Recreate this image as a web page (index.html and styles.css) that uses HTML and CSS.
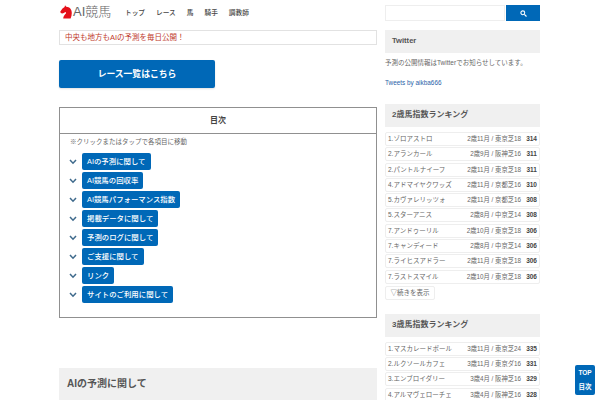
FILE: index.html
```html
<!DOCTYPE html>
<html lang="ja">
<head>
<meta charset="utf-8">
<title>AI競馬</title>
<link rel="stylesheet" href="styles.css">
</head>
<body>
<div class="page">
  <main class="main">
    <header class="site-header">
      <a class="logo">
        <svg class="logo-icon" viewBox="0 0 12 14" width="12" height="14"><path fill="#e5101a" d="M5 0.3 L6.3 1.7 C9.6 1.9 11.8 4.2 11.8 8 C11.8 10 11.4 11.8 10.6 13.4 L3.2 13.4 C3.3 11.4 4.5 10 5.9 8.6 C6.2 7.8 5.9 7.2 5.3 7.1 C4.4 7.8 3.4 8.6 2.3 8.6 L0.7 8 L0.3 6.6 L2.5 3.4 L4.6 2.1 Z"/></svg>
        <span class="logo-text">AI競馬</span>
      </a>
      <nav class="nav">
        <a>トップ</a><a>レース</a><a>馬</a><a>騎手</a><a>調教師</a>
      </nav>
    </header>
    <p class="notice">中央も地方もAIの予測を毎日公開！</p>
    <a class="race-btn">レース一覧はこちら</a>
    <section class="toc">
      <div class="toc-title">目次</div>
      <p class="toc-note">※クリックまたはタップで各項目に移動</p>
      <ul class="toc-list">
        <li><svg class="chev" viewBox="0 0 8 6" width="8" height="6"><path d="M1 1 L4 4.2 L7 1" fill="none" stroke="#3f6a8c" stroke-width="1.5"/></svg><a class="toc-link">AIの予測に関して</a></li>
        <li><svg class="chev" viewBox="0 0 8 6" width="8" height="6"><path d="M1 1 L4 4.2 L7 1" fill="none" stroke="#3f6a8c" stroke-width="1.5"/></svg><a class="toc-link">AI競馬の回収率</a></li>
        <li><svg class="chev" viewBox="0 0 8 6" width="8" height="6"><path d="M1 1 L4 4.2 L7 1" fill="none" stroke="#3f6a8c" stroke-width="1.5"/></svg><a class="toc-link">AI競馬パフォーマンス指数</a></li>
        <li><svg class="chev" viewBox="0 0 8 6" width="8" height="6"><path d="M1 1 L4 4.2 L7 1" fill="none" stroke="#3f6a8c" stroke-width="1.5"/></svg><a class="toc-link">掲載データに関して</a></li>
        <li><svg class="chev" viewBox="0 0 8 6" width="8" height="6"><path d="M1 1 L4 4.2 L7 1" fill="none" stroke="#3f6a8c" stroke-width="1.5"/></svg><a class="toc-link">予測のログに関して</a></li>
        <li><svg class="chev" viewBox="0 0 8 6" width="8" height="6"><path d="M1 1 L4 4.2 L7 1" fill="none" stroke="#3f6a8c" stroke-width="1.5"/></svg><a class="toc-link">ご支援に関して</a></li>
        <li><svg class="chev" viewBox="0 0 8 6" width="8" height="6"><path d="M1 1 L4 4.2 L7 1" fill="none" stroke="#3f6a8c" stroke-width="1.5"/></svg><a class="toc-link">リンク</a></li>
        <li><svg class="chev" viewBox="0 0 8 6" width="8" height="6"><path d="M1 1 L4 4.2 L7 1" fill="none" stroke="#3f6a8c" stroke-width="1.5"/></svg><a class="toc-link">サイトのご利用に関して</a></li>
      </ul>
    </section>
    <h2 class="main-heading">AIの予測に関して</h2>
  </main>
  <aside class="side">
    <form class="search">
      <input class="search-input" type="text" aria-label="検索">
      <button class="search-btn" type="button" aria-label="検索">
        <svg viewBox="0 0 8 8" width="7" height="7"><circle cx="3.2" cy="3.2" r="2.2" fill="none" stroke="#fff" stroke-width="1.2"/><path d="M5 5 L7.4 7.4" stroke="#fff" stroke-width="1.4"/></svg>
      </button>
    </form>
    <h3 class="side-heading twitter">Twitter</h3>
    <p class="side-text">予測の公開情報はTwitterでお知らせしています。</p>
    <a class="tweets">Tweets by aikba666</a>
    <h3 class="side-heading rank-head">2歳馬指数ランキング</h3>
    <ul class="rank">
      <li><span class="name">1.ゾロアストロ</span><span class="info">2歳11月 / 東京芝18</span><b class="score">314</b></li>
      <li><span class="name">2.アランカール</span><span class="info">2歳9月 / 阪神芝16</span><b class="score">311</b></li>
      <li><span class="name">2.パントルナイーフ</span><span class="info">2歳11月 / 東京芝18</span><b class="score">311</b></li>
      <li><span class="name">4.アドマイヤクワッズ</span><span class="info">2歳11月 / 京都芝16</span><b class="score">310</b></li>
      <li><span class="name">5.カヴァレリッツォ</span><span class="info">2歳11月 / 京都芝16</span><b class="score">308</b></li>
      <li><span class="name">5.スターアニス</span><span class="info">2歳8月 / 中京芝14</span><b class="score">308</b></li>
      <li><span class="name">7.アンドゥーリル</span><span class="info">2歳10月 / 東京芝18</span><b class="score">306</b></li>
      <li><span class="name">7.キャンディード</span><span class="info">2歳8月 / 中京芝14</span><b class="score">306</b></li>
      <li><span class="name">7.ライヒスアドラー</span><span class="info">2歳11月 / 東京芝18</span><b class="score">306</b></li>
      <li><span class="name">7.ラストスマイル</span><span class="info">2歳10月 / 東京芝18</span><b class="score">306</b></li>
    </ul>
    <button class="more" type="button">▽続きを表示</button>
    <h3 class="side-heading rank-head second">3歳馬指数ランキング</h3>
    <ul class="rank">
      <li><span class="name">1.マスカレードボール</span><span class="info">3歳11月 / 東京芝24</span><b class="score">335</b></li>
      <li><span class="name">2.ルクソールカフェ</span><span class="info">3歳11月 / 東京ダ16</span><b class="score">331</b></li>
      <li><span class="name">3.エンブロイダリー</span><span class="info">3歳4月 / 阪神芝16</span><b class="score">329</b></li>
      <li><span class="name">4.アルマヴェローチェ</span><span class="info">3歳4月 / 阪神芝16</span><b class="score">328</b></li>
    </ul>
  </aside>
</div>
<div class="float-nav"><a>TOP</a><a>目次</a></div>
</body>
</html>
```

FILE: styles.css
```css
* { box-sizing: border-box; }
html, body { margin: 0; padding: 0; height: 400px; overflow: hidden; background: #fff; }
body { font-family: "Liberation Sans", "Noto Sans CJK JP", sans-serif; color: #555; }
ul { list-style: none; margin: 0; padding: 0; }
p, h2, h3 { margin: 0; }
.page { width: 481px; margin: 0 0 0 59px; display: flex; gap: 8px; align-items: flex-start; }
.main { width: 318px; flex: none; }
.side { width: 155px; flex: none; padding-top: 5px; }
.site-header { display: flex; align-items: center; height: 24px; }
.logo { display: flex; align-items: center; width: 66px; padding-left: 1px; }
.logo-icon { flex: none; }
.logo-text { font-size: 13px; color: #666; font-weight: 300; margin-left: 1px; line-height: 24px; }
.nav { display: flex; font-size: 6.7px; font-weight: 500; color: #444; }
.nav a { margin-right: 11px; }
.notice { margin-top: 6px; height: 15px; border: 1px solid #e2e2e2; padding-left: 5px; font-size: 7.5px; line-height: 13px; color: #c0392b; }
.race-btn { display: block; margin-top: 15px; width: 156px; height: 28px; border-radius: 2px; background: #0068b7; color: #fff; font-size: 8.8px; font-weight: 700; text-align: center; line-height: 28px; box-shadow: 0 1px 2px rgba(0,0,0,.12); }
.toc { margin-top: 19px; height: 211px; border: 1px solid #909090; }
.toc-title { height: 26px; border-bottom: 1px solid #909090; text-align: center; font-size: 8px; font-weight: 700; line-height: 25px; color: #444; }
.toc-note { margin: 3px 0 0 10px; font-size: 6.5px; line-height: 10px; color: #666; }
.toc-list { margin: 6px 0 0 9px; display: flex; flex-direction: column; gap: 2px; }
.toc-list li { display: flex; align-items: center; height: 17px; }
.chev { flex: none; margin-right: 5px; }
.toc-link { height: 17px; padding: 0 5px; background: #0068b7; border-radius: 2px; color: #fff; font-size: 7.4px; font-weight: 500; line-height: 17px; white-space: nowrap; }
.main-heading { margin-top: 50px; height: 32px; padding-left: 8px; background: #f0f0f0; font-size: 10px; font-weight: 700; line-height: 31px; color: #555; }
.search { display: flex; gap: 1px; height: 16px; }
.search-input { width: 120px; height: 16px; border: 1px solid #eee; padding: 0; background: #fff; }
.search-btn { width: 34px; height: 16px; border: 0; padding: 0; background: #0068b7; display: flex; align-items: center; justify-content: center; }
.side-heading { height: 23px; padding-left: 7px; background: #f0f0f0; font-size: 8px; font-weight: 700; line-height: 22px; color: #555; }
.twitter { margin-top: 9px; font-size: 7.6px; }
.side-text { margin-top: 4px; font-size: 6.5px; line-height: 12px; color: #666; }
.tweets { display: block; margin-top: 8px; font-size: 6.4px; line-height: 12px; color: #2a5fa8; }
.rank-head { margin-top: 15px; }
.rank-head.second { margin-top: 14px; }
.rank { margin-top: 5px; display: flex; flex-direction: column; gap: 1.3px; }
.rank li { display: flex; align-items: center; height: 14px; padding: 0 2px; border: 1px solid #eee; border-radius: 2px; line-height: 12px; color: #666; white-space: nowrap; }
.name { flex: 1; min-width: 0; font-size: 6.5px; }
.info { font-size: 6.3px; }
.score { width: 16px; text-align: right; font-size: 6.5px; color: #444; }
.more { display: block; margin-top: 2px; width: 50px; height: 14px; padding: 0; border: 1px solid #eee; border-radius: 2px; background: #fff; font: inherit; font-size: 6.5px; line-height: 12px; color: #666; }
.float-nav { position: fixed; left: 575px; top: 365px; width: 20px; height: 30px; border-radius: 2px; background: #0068b7; display: flex; flex-direction: column; align-items: center; justify-content: space-around; padding: 2px 0; color: #fff; font-size: 6.5px; font-weight: 700; }
```
